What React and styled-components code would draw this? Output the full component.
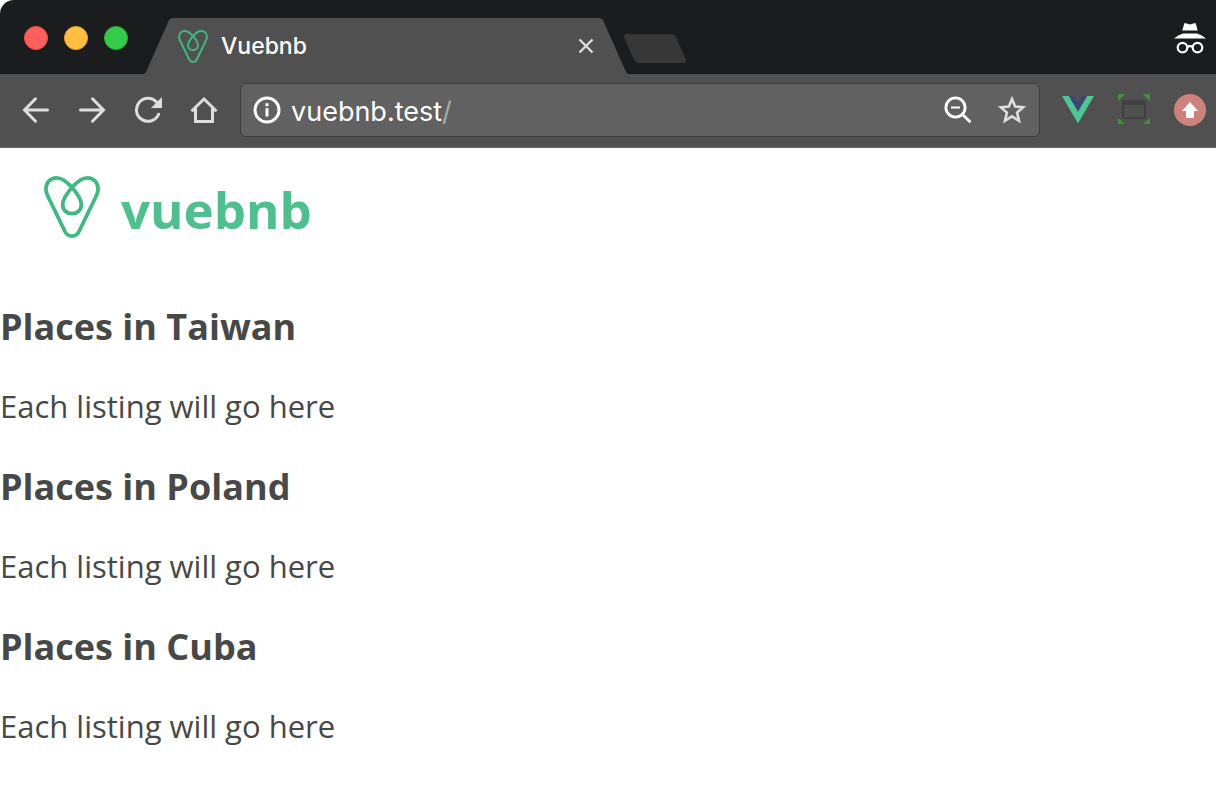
import React from "react";
import styled, { createGlobalStyle } from "styled-components";

const GlobalStyle = createGlobalStyle`
  *, *::before, *::after { box-sizing: border-box; }
  body {
    margin: 0;
    background: #ffffff;
    color: #484848;
    font-family: "Open Sans", sans-serif;
    font-size: 31px;
  }
`;

const uiFont = `Inter, Roboto, "Liberation Sans", sans-serif`;

const BrowserChrome = styled.header`
  font-family: ${uiFont};
`;

const TabStrip = styled.div`
  display: flex;
  align-items: center;
  height: 74px;
  padding: 0 10px 0 24px;
  background: #1b1c1e;
  border-bottom: 1px solid #141517;
  border-top-left-radius: 14px;
`;

const WindowControls = styled.div`
  display: flex;
  gap: 16px;
  margin: 3px 16px 0 0;
`;

const WindowButton = styled.button`
  width: 24px;
  height: 24px;
  padding: 0;
  border: 1px solid ${({ $edge }) => $edge};
  border-radius: 50%;
  background: ${({ $fill }) => $fill};
`;

const Tab = styled.div`
  display: flex;
  align-items: center;
  align-self: flex-end;
  flex: 0 1 484px;
  height: 56px;
  margin-bottom: -1px;
  padding: 0 34px;
  background: #505050;
  color: #ffffff;
  clip-path: polygon(0 100%, 2px 54px, 25px 2px, 28px 0, calc(100% - 28px) 0, calc(100% - 25px) 2px, calc(100% - 2px) 54px, 100% 100%);
`;

const TabTitle = styled.span`
  flex: 1;
  margin-left: 13px;
  font-size: 23px;
  font-weight: 500;
  line-height: 32px;
`;

const IconButton = styled.button`
  display: flex;
  align-items: center;
  justify-content: center;
  flex: none;
  width: ${({ $size = 28 }) => $size}px;
  height: ${({ $size = 28 }) => $size}px;
  padding: 0;
  border: 0;
  background: none;
  color: ${({ $color = "#dedede" }) => $color};
`;

const NewTabButton = styled.button`
  width: 52px;
  height: 29px;
  margin: 24px 0 0 1px;
  padding: 0;
  border: 0;
  border-radius: 4px;
  background: #373737;
  transform: skewX(24deg);
`;

const IncognitoBadge = styled.div`
  display: flex;
  margin-left: auto;
  margin-top: 4px;
`;

const Toolbar = styled.div`
  display: flex;
  align-items: center;
  gap: 22px;
  height: 74px;
  padding: 0 10px 1px 22px;
  background: #505050;
  border-bottom: 1px solid #666666;
`;

const Navigation = styled.nav`
  display: flex;
  gap: 28px;
`;

const AddressBar = styled.form`
  display: flex;
  align-items: center;
  flex: 1;
  min-width: 0;
  height: 54px;
  padding: 0 13px 0 12px;
  background: #616161;
  border: 1px solid #3d3d3d;
  border-radius: 6px;
  color: #ffffff;
  font-size: 27px;
`;

const AddressInput = styled.input`
  field-sizing: content;
  min-width: 0;
  margin-left: 10px;
  padding: 2px 0 0;
  border: 0;
  outline: 0;
  background: none;
  color: inherit;
  font: inherit;
`;

const AddressPath = styled.span`
  flex: 1;
  padding-top: 2px;
  color: #a9a9a9;
`;

const AddressActions = styled.div`
  display: flex;
  gap: 26px;
`;

const Extensions = styled.div`
  display: flex;
  gap: 24px;
`;

const SiteHeader = styled.div`
  padding: 24px 40px 0;
`;

const Brand = styled.a`
  display: inline-flex;
  align-items: center;
  gap: 21px;
  padding: 0 4px;
  color: #4fc08d;
  font-size: 51px;
  font-weight: 700;
  line-height: 70px;
  text-decoration: none;
`;

const BrandName = styled.span`
  padding-top: 2px;
  margin-bottom: -2px;
`;

const Listings = styled.main`
  padding-top: 55px;
`;

const Group = styled.section`
  padding-bottom: 34px;
`;

const GroupTitle = styled.h1`
  margin: 0;
  font-size: 36px;
  font-weight: 700;
  line-height: 50px;
`;

const GroupText = styled.p`
  margin: 32px 0 0;
  font-size: 31px;
  line-height: 44px;
`;

const BrandMark = ({ width, height, stroke }) => (
  <svg width={width} height={height} viewBox="0 0 56 62" fill="none" aria-hidden="true">
    <path
      stroke="#41b883"
      strokeWidth={stroke}
      d="M28 11.5C32 7 38 1.9 43.5 1.9C49.5 1.9 54.1 6.5 54.1 13C54.1 16 53 18.5 52 20.5L35 55.5C33.5 58.5 31 60.1 28 60.1C25 60.1 22.5 58.5 21 55.5L4 20.5C3 18.5 1.9 16 1.9 13C1.9 6.5 6.5 1.9 12.5 1.9C18 1.9 24 7 28 11.5C33 17 37.3 23 37.3 29C37.3 34 33 37.7 28 37.7C23 37.7 18.7 34 18.7 29C18.7 23 23 17 28 11.5Z"
    />
  </svg>
);

const Stroke = ({ size = 28, width = 3, children }) => (
  <svg
    width={size}
    height={size}
    viewBox={`0 0 ${size} ${size}`}
    fill="none"
    stroke="currentColor"
    strokeWidth={width}
    aria-hidden="true"
  >
    {children}
  </svg>
);

const places = ["Taiwan", "Poland", "Cuba"];

export default function App() {
  return (
    <>
      <GlobalStyle />
      <BrowserChrome>
        <TabStrip>
          <WindowControls>
            <WindowButton type="button" aria-label="Close window" $fill="#ff5f5b" $edge="#e8524f" />
            <WindowButton type="button" aria-label="Minimise window" $fill="#ffbe3f" $edge="#e5a735" />
            <WindowButton type="button" aria-label="Zoom window" $fill="#34cc4a" $edge="#27b138" />
          </WindowControls>
          <Tab>
            <BrandMark width={30} height={33} stroke={3.8} />
            <TabTitle>Vuebnb</TabTitle>
            <IconButton type="button" aria-label="Close tab" $size={16}>
              <Stroke size={16} width={2.4}>
                <path d="M1.5 1.5L14.5 14.5M14.5 1.5L1.5 14.5" />
              </Stroke>
            </IconButton>
          </Tab>
          <NewTabButton type="button" aria-label="New tab" />
          <IncognitoBadge>
            <svg width="32" height="32" viewBox="0 0 32 32" fill="none" aria-label="Incognito" role="img">
              <path fill="#fff" d="M8.3 7.5L10.2 .8Q10.6 -.2 11.6.2L16 1.4L20.4.2Q21.4 -.2 21.8.8L23.7 7.5ZM9 10.6H23Q28 12 32 15.4H0Q4 12 9 10.6Z" />
              <g stroke="#fff" strokeWidth="2.2">
                <circle cx="8.5" cy="24.6" r="4.8" />
                <circle cx="23.5" cy="24.6" r="4.8" />
                <path d="M13 24Q16 22.2 19 24" />
              </g>
            </svg>
          </IncognitoBadge>
        </TabStrip>
        <Toolbar>
          <Navigation aria-label="Browser">
            <IconButton type="button" aria-label="Back">
              <Stroke>
                <path strokeLinecap="round" d="M25.5 14H3M13.5 2.8L2.5 14L13.5 25.2" />
              </Stroke>
            </IconButton>
            <IconButton type="button" aria-label="Forward">
              <Stroke>
                <path strokeLinecap="round" d="M2.5 14H25M14.5 2.8L25.5 14L14.5 25.2" />
              </Stroke>
            </IconButton>
            <IconButton type="button" aria-label="Reload">
              <Stroke>
                <path strokeLinecap="round" d="M24.6 18.2A11.5 11.5 0 1 1 22.6 6.2" />
                <path fill="currentColor" stroke="none" d="M28 1V12H17Z" />
              </Stroke>
            </IconButton>
            <IconButton type="button" aria-label="Home">
              <Stroke>
                <path d="M5.5 12V25.5H22.5V12M1.5 15.2L14 3L26.5 15.2" />
              </Stroke>
            </IconButton>
          </Navigation>
          <AddressBar>
            <IconButton type="button" aria-label="Site information" $color="#fff">
              <Stroke>
                <circle cx="14" cy="14" r="12" />
                <path d="M14 12.3V20.5M14 7.3V10.3" />
              </Stroke>
            </IconButton>
            <AddressInput aria-label="Address" defaultValue="vuebnb.test" spellCheck={false} />
            <AddressPath>/</AddressPath>
            <AddressActions>
              <IconButton type="button" aria-label="Zoom level" $color="#fff">
                <Stroke width={2.8}>
                  <circle cx="11.5" cy="11.5" r="9.6" />
                  <path strokeWidth="2" d="M7 11.5H16" />
                  <path d="M18.5 18.5L26.5 26.2" />
                </Stroke>
              </IconButton>
              <IconButton type="button" aria-label="Bookmark this page">
                <Stroke width={2.6}>
                  <path d="M14 3L17.1 10.5L25.3 11.2L19.1 16.6L21 24.8L14 20.4L7 24.8L8.9 16.6L2.7 11.2L10.9 10.5Z" />
                </Stroke>
              </IconButton>
            </AddressActions>
          </AddressBar>
          <Extensions>
            <IconButton type="button" aria-label="Vue devtools" $size={32}>
              <svg width="32" height="32" viewBox="0 0 32 32" aria-hidden="true">
                <path fill="#4fc494" d="M0 2H7L16 17.5L25 2H32L16 29.5Z" />
                <path fill="#3b4770" d="M7 2H12.5L16 8L19.5 2H25L16 17.5Z" />
              </svg>
            </IconButton>
            <IconButton type="button" aria-label="Window resizer" $size={32}>
              <svg width="32" height="32" viewBox="0 0 32 32" aria-hidden="true">
                <path fill="#43913a" d="M0 0H7L0 7ZM25 0H32V7ZM0 24L7 30H0ZM32 24V30H25Z" />
                <path fill="#414141" fillRule="evenodd" d="M6 6H26Q28 6 28 8V23Q28 25 26 25H6Q4 25 4 23V8Q4 6 6 6ZM6 11V23H26V11Z" />
              </svg>
            </IconButton>
            <IconButton type="button" aria-label="Upload" $size={32}>
              <svg width="32" height="32" viewBox="0 0 32 32" aria-hidden="true">
                <circle cx="16" cy="16" r="16" fill="#cd837c" />
                <path fill="#fff" d="M16 8L24 17H20V24H12V17H8Z" />
              </svg>
            </IconButton>
          </Extensions>
        </Toolbar>
      </BrowserChrome>
      <SiteHeader>
        <Brand href="#">
          <BrandMark width={56} height={62} stroke={3.8} />
          <BrandName>vuebnb</BrandName>
        </Brand>
      </SiteHeader>
      <Listings>
        {places.map((place) => (
          <Group key={place}>
            <GroupTitle>Places in {place}</GroupTitle>
            <GroupText>Each listing will go here</GroupText>
          </Group>
        ))}
      </Listings>
    </>
  );
}
